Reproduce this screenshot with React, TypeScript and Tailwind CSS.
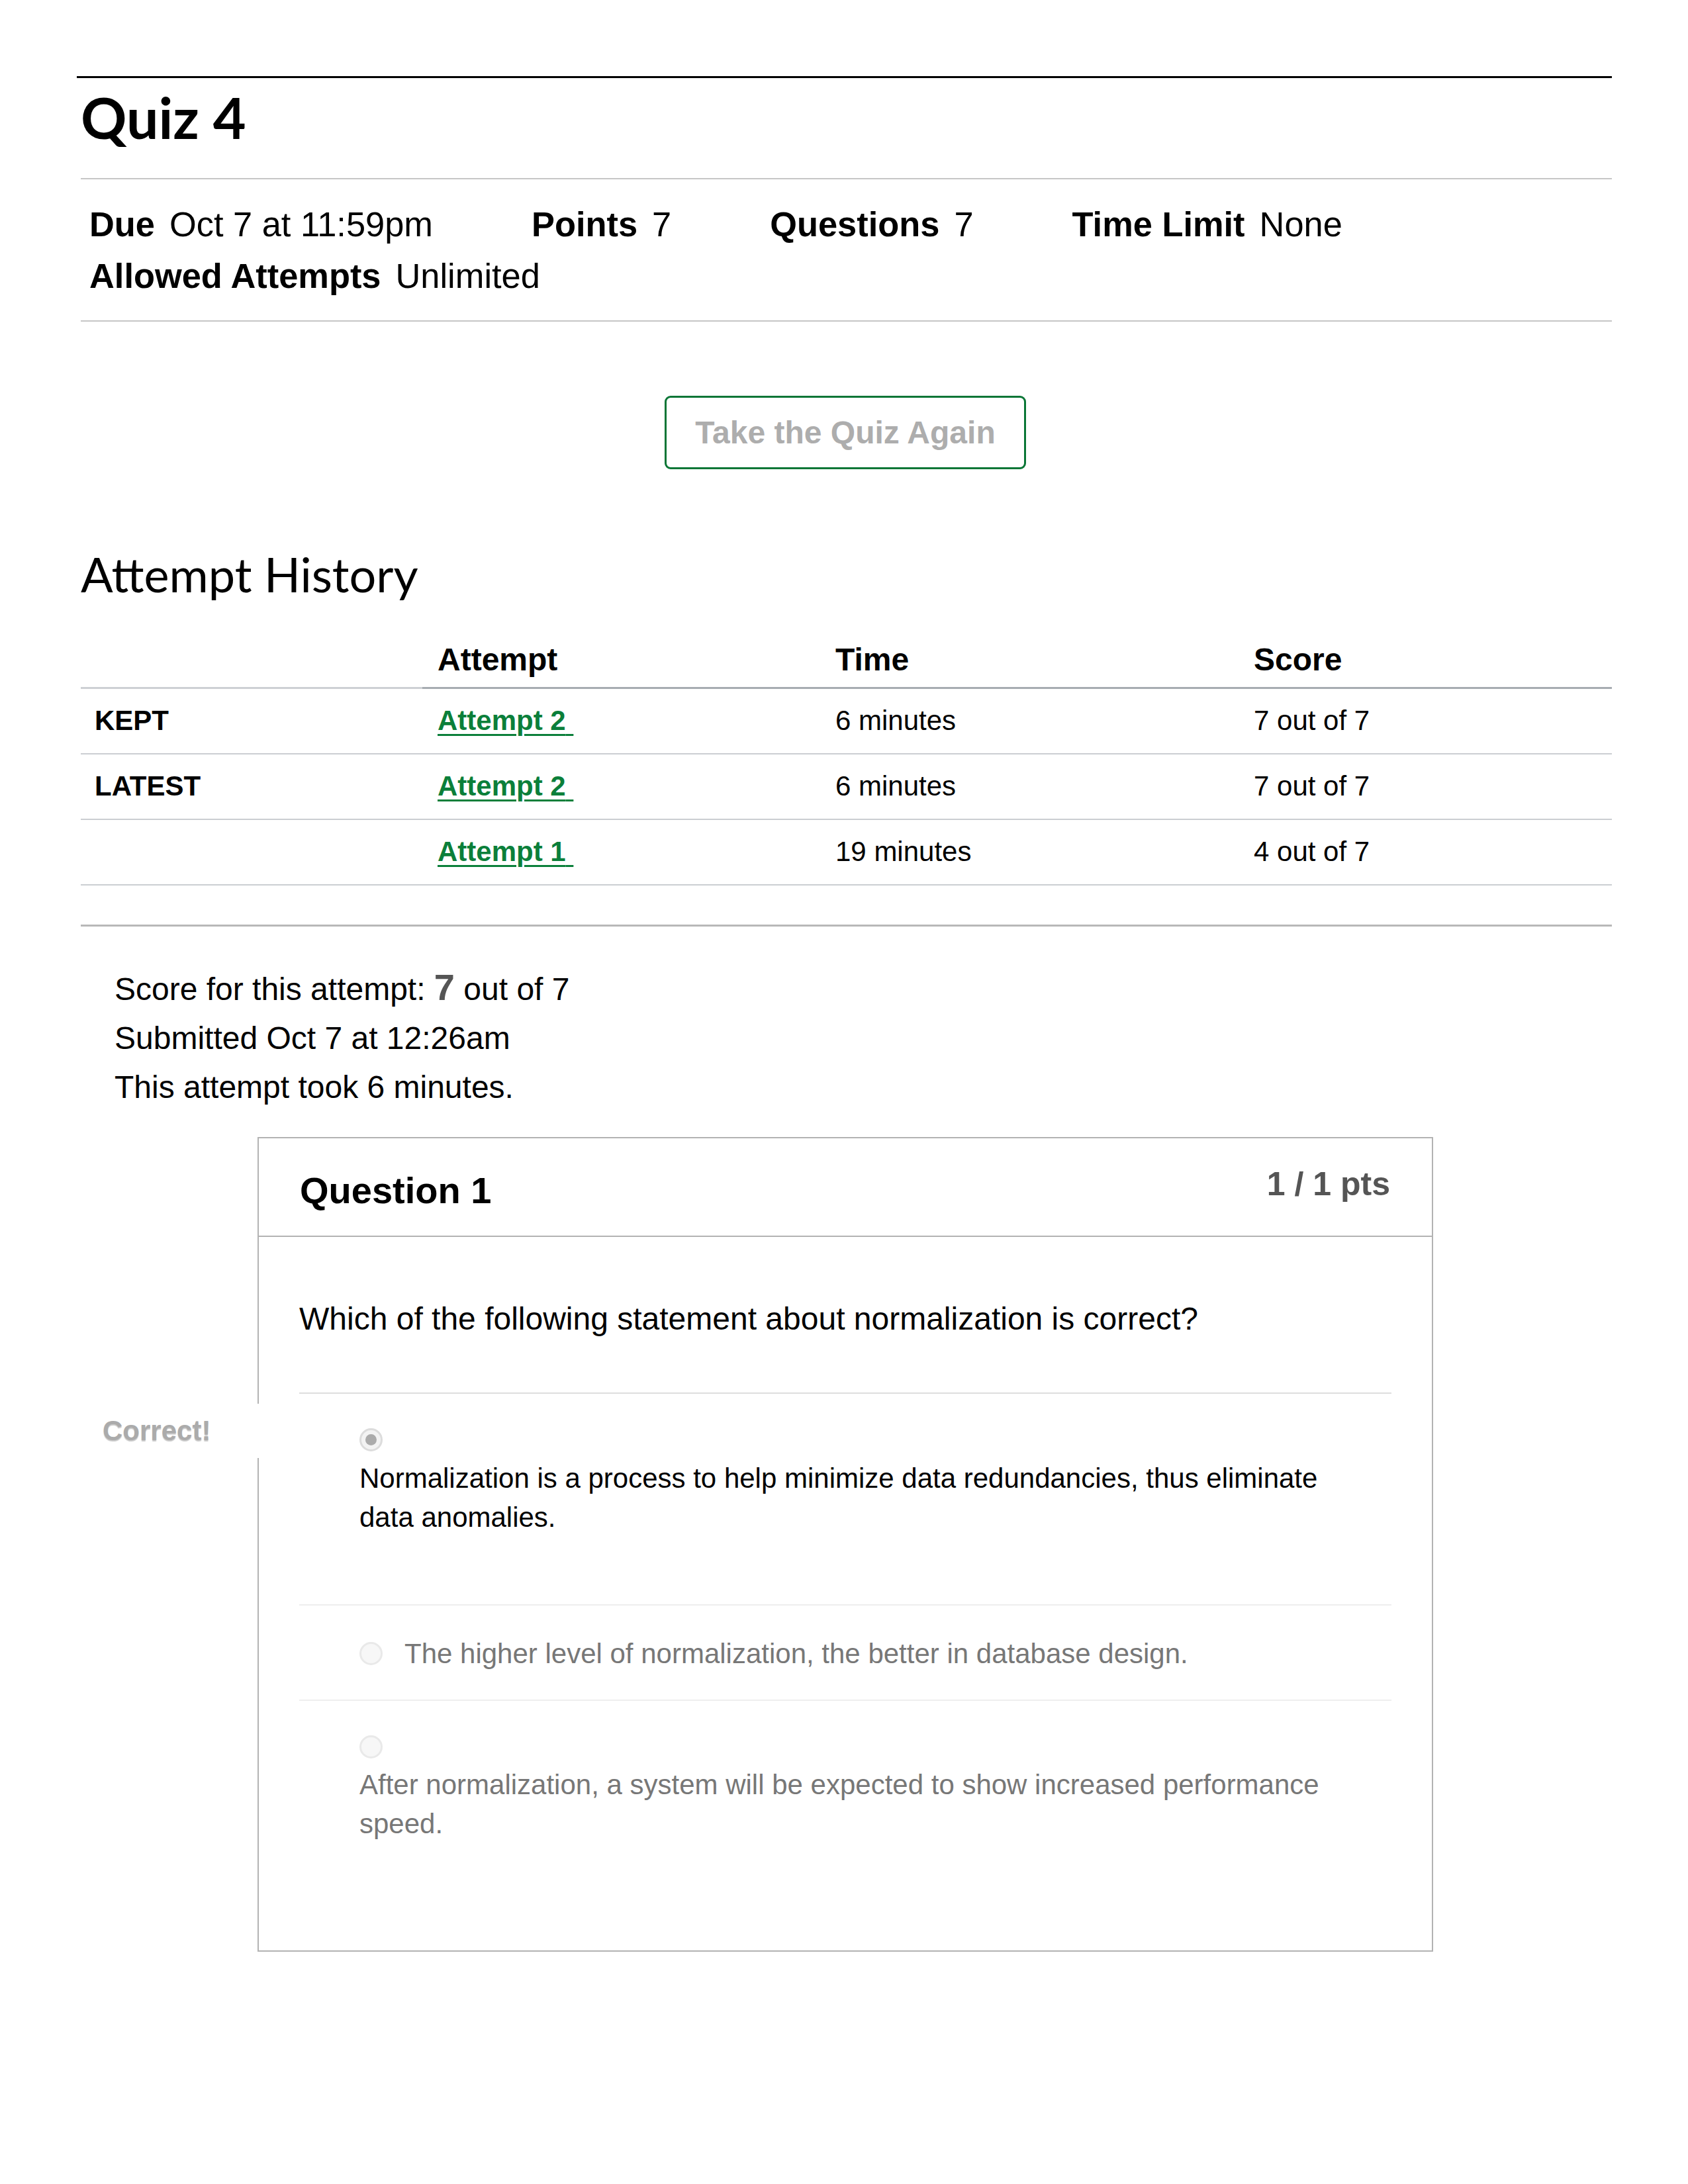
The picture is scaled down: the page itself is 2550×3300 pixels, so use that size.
import React from "react";

const sans = "font-['Liberation_Sans',Arial,sans-serif]";
const lato = "font-['Lato','Liberation_Sans',sans-serif]";

function Radio({ selected }: { selected?: boolean }) {
  if (selected) {
    return (
      <div className="flex h-[35px] w-[35px] items-center justify-center rounded-full border-[3px] border-[#dcdcdc] bg-[#f3f3f3]">
        <div className="h-[17px] w-[17px] rounded-full bg-[#ababab]" />
      </div>
    );
  }
  return <div className="h-[35px] w-[35px] shrink-0 rounded-full border-[3px] border-[#e9e9e9] bg-[#f7f7f7]" />;
}

const rows = [
  { label: "KEPT", link: "Attempt 2", time: "6 minutes", score: "7 out of 7" },
  { label: "LATEST", link: "Attempt 2", time: "6 minutes", score: "7 out of 7" },
  { label: "", link: "Attempt 1", time: "19 minutes", score: "4 out of 7" },
];

export default function App() {
  return (
    <div className={`min-h-[3300px] w-[2550px] bg-white text-black ${sans}`}>
      <div className="ml-[116px] w-[2319px] pt-[115px]">
        <div className="h-[3px] bg-black" />
        <h1 className={`${lato} ml-[6px] mt-[7px] text-[86px] font-bold leading-[1.2]`}>Quiz 4</h1>

        <div className="ml-[6px] mt-[41px] h-[2px] bg-[#c6c6c6]" />
        <div className="flex flex-wrap gap-x-[149px] pl-[19px] pt-[29px] pb-[28px] text-[52.4px] leading-[78px]">
          <div className="flex">
            <span className="font-bold">Due</span>
            <span className="ml-[22px]">Oct 7 at 11:59pm</span>
          </div>
          <div className="flex">
            <span className="font-bold">Points</span>
            <span className="ml-[22px]">7</span>
          </div>
          <div className="flex">
            <span className="font-bold">Questions</span>
            <span className="ml-[22px]">7</span>
          </div>
          <div className="flex">
            <span className="font-bold">Time Limit</span>
            <span className="ml-[22px]">None</span>
          </div>
          <div className="flex">
            <span className="font-bold">Allowed Attempts</span>
            <span className="ml-[22px]">Unlimited</span>
          </div>
        </div>
        <div className="ml-[6px] h-[2px] bg-[#c6c6c6]" />

        <div className="mt-[112px] flex justify-center pl-[3px]">
          <div className="flex h-[111px] w-[546px] items-center justify-center rounded-[9px] border-[3px] border-[#0a7636] text-[48px] font-bold text-[#adadad]">
            Take the Quiz Again
          </div>
        </div>

        <h2 className={`${lato} ml-[6px] mt-[115px] text-[72px] font-normal leading-[1.2]`}>Attempt History</h2>

        <div className="ml-[6px] mt-[57px] w-[2313px]">
          <div className="grid grid-cols-[516px_602px_632px_563px] text-[48px] font-bold leading-[58px]">
            <div className="h-[73px] border-b-[3px] border-[#cdd0d4]" />
            <div className="h-[73px] border-b-[3px] border-[#a7acb1] px-[23px]">Attempt</div>
            <div className="h-[73px] border-b-[3px] border-[#a7acb1] px-[22px]">Time</div>
            <div className="h-[73px] border-b-[3px] border-[#a7acb1] px-[22px]">Score</div>
          </div>
          {rows.map((r, i) => (
            <div key={i} className="grid grid-cols-[516px_602px_632px_563px] text-[42px] leading-[50px]">
              <div className="flex h-[99px] items-center border-b-2 border-[#cbced2] pl-[21px] font-bold">{r.label}</div>
              <div className="flex h-[99px] items-center border-b-2 border-[#cbced2] px-[23px]">
                <span className="font-bold text-[#0b7f3a] underline decoration-[3px] underline-offset-[6px]">
                  {r.link}&nbsp;
                </span>
              </div>
              <div className="flex h-[99px] items-center border-b-2 border-[#cbced2] px-[22px]">{r.time}</div>
              <div className="flex h-[99px] items-center border-b-2 border-[#cbced2] px-[22px]">{r.score}</div>
            </div>
          ))}
        </div>

        <div className="ml-[6px] mt-[59px] h-[3px] bg-[#b8b8b8]" />

        <div className="ml-[57px] mt-[58px] text-[48px] leading-[74px]">
          <div>
            Score for this attempt: <span className="text-[56px] font-bold leading-none text-[#555555]">7</span> out of 7
          </div>
          <div>Submitted Oct 7 at 12:26am</div>
          <div>This attempt took 6 minutes.</div>
        </div>

        <div className="ml-[273px] mt-[38px] w-[1776px] border-2 border-[#b3b3b3]">
          <div className="flex h-[149px] items-center justify-between border-b-2 border-[#b3b3b3] pl-[62px] pr-[63px]">
            <div className="mt-[12px] text-[56px] font-bold leading-[62px]">Question 1</div>
            <div className="mt-[-8px] text-[50px] font-bold leading-[58px] text-[#555555]">1 / 1 pts</div>
          </div>

          <div className="pl-[61px] pr-[61px] pt-[95px] pb-[162px]">
            <div className="text-[48px] leading-[58px]">Which of the following statement about normalization is correct?</div>
            <div className="mt-[82px] h-[2px] bg-[#dedede]" />

            <div className="relative pl-[91px] pt-[52px] pb-[102px]">
              <div className="absolute left-[-322px] top-[15px] flex h-[82px] w-[266px] items-center bg-white pl-[25px]">
                <span className="text-[42px] font-bold leading-none text-[#ababab] [text-shadow:0_2px_1px_rgba(0,0,0,0.22)]">
                  Correct!
                </span>
              </div>
              <Radio selected />
              <div className="mt-[11px] w-[1500px] text-[42px] leading-[59px] text-black">
                Normalization is a process to help minimize data redundancies, thus eliminate data anomalies.
              </div>
            </div>
            <div className="h-[2px] bg-[#eeeeee]" />

            <div className="flex items-center pl-[91px] pt-[43px] pb-[40px]">
              <Radio />
              <div className="ml-[33px] text-[42px] leading-[59px] text-[#777777]">
                The higher level of normalization, the better in database design.
              </div>
            </div>
            <div className="h-[2px] bg-[#eeeeee]" />

            <div className="pl-[91px] pt-[52px]">
              <Radio />
              <div className="mt-[10px] w-[1500px] text-[42px] leading-[59px] text-[#777777]">
                After normalization, a system will be expected to show increased performance speed.
              </div>
            </div>
          </div>
        </div>
      </div>
    </div>
  );
}
